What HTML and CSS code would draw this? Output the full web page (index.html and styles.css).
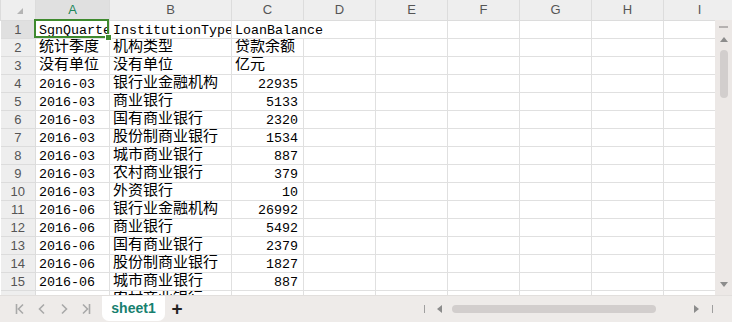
FILE: index.html
```html
<!DOCTYPE html>
<html lang="zh">
<head>
    <meta charset="UTF-8">
    <title>sheet1</title>
    <link rel="stylesheet" href="styles.css">
</head>
<body>
    <div class="book">
        <div class="sheet">
            <table class="grid">
                <colgroup>
                    <col class="w-head"><col class="w-a"><col class="w-b">
                    <col class="w-std"><col class="w-std"><col class="w-std"><col class="w-std">
                    <col class="w-std"><col class="w-std"><col class="w-std">
                </colgroup>
                <thead>
                    <tr>
                        <th class="corner"><span class="corner-mark"></span></th>
                        <th class="on">A</th><th>B</th><th>C</th><th>D</th><th>E</th>
                        <th>F</th><th>G</th><th>H</th><th>I</th>
                    </tr>
                </thead>
                <tbody>
                    <tr><th class="on">1</th><td>SgnQuarter</td><td>InstitutionType</td><td class="spill">LoanBalance</td><td></td><td></td><td></td><td></td><td></td><td></td></tr>
                    <tr><th>2</th><td class="zh">统计季度</td><td class="zh">机构类型</td><td class="zh">贷款余额</td><td></td><td></td><td></td><td></td><td></td><td></td></tr>
                    <tr><th>3</th><td class="zh">没有单位</td><td class="zh">没有单位</td><td class="zh">亿元</td><td></td><td></td><td></td><td></td><td></td><td></td></tr>
                    <tr><th>4</th><td>2016-03</td><td class="zh">银行业金融机构</td><td class="num">22935</td><td></td><td></td><td></td><td></td><td></td><td></td></tr>
                    <tr><th>5</th><td>2016-03</td><td class="zh">商业银行</td><td class="num">5133</td><td></td><td></td><td></td><td></td><td></td><td></td></tr>
                    <tr><th>6</th><td>2016-03</td><td class="zh">国有商业银行</td><td class="num">2320</td><td></td><td></td><td></td><td></td><td></td><td></td></tr>
                    <tr><th>7</th><td>2016-03</td><td class="zh">股份制商业银行</td><td class="num">1534</td><td></td><td></td><td></td><td></td><td></td><td></td></tr>
                    <tr><th>8</th><td>2016-03</td><td class="zh">城市商业银行</td><td class="num">887</td><td></td><td></td><td></td><td></td><td></td><td></td></tr>
                    <tr><th>9</th><td>2016-03</td><td class="zh">农村商业银行</td><td class="num">379</td><td></td><td></td><td></td><td></td><td></td><td></td></tr>
                    <tr><th>10</th><td>2016-03</td><td class="zh">外资银行</td><td class="num">10</td><td></td><td></td><td></td><td></td><td></td><td></td></tr>
                    <tr><th>11</th><td>2016-06</td><td class="zh">银行业金融机构</td><td class="num">26992</td><td></td><td></td><td></td><td></td><td></td><td></td></tr>
                    <tr><th>12</th><td>2016-06</td><td class="zh">商业银行</td><td class="num">5492</td><td></td><td></td><td></td><td></td><td></td><td></td></tr>
                    <tr><th>13</th><td>2016-06</td><td class="zh">国有商业银行</td><td class="num">2379</td><td></td><td></td><td></td><td></td><td></td><td></td></tr>
                    <tr><th>14</th><td>2016-06</td><td class="zh">股份制商业银行</td><td class="num">1827</td><td></td><td></td><td></td><td></td><td></td><td></td></tr>
                    <tr><th>15</th><td>2016-06</td><td class="zh">城市商业银行</td><td class="num">887</td><td></td><td></td><td></td><td></td><td></td><td></td></tr>
                    <tr><th>16</th><td>2016-06</td><td class="zh">农村商业银行</td><td class="num">379</td><td></td><td></td><td></td><td></td><td></td><td></td></tr>
                </tbody>
            </table>

            <!-- 選取框 -->
            <div class="selection"><span class="handle"></span></div>

            <!-- 垂直捲軸 -->
            <div class="vscroll">
                <span class="vs-dash"></span>
                <span class="arrow-up"></span>
                <span class="vs-thumb"></span>
                <span class="arrow-down"></span>
            </div>
        </div>

        <div class="tabbar">
            <div class="nav">
                <span class="nav-btn">
                    <svg width="10" height="12" viewBox="0 0 10 12"><path d="M1.5 1v10M8 1.5L3.5 6L8 10.5" fill="none" stroke="#a9a9a9" stroke-width="1.6"/></svg>
                </span>
                <span class="nav-btn">
                    <svg width="10" height="12" viewBox="0 0 10 12"><path d="M7 1.5L2.5 6L7 10.5" fill="none" stroke="#a9a9a9" stroke-width="1.6"/></svg>
                </span>
                <span class="nav-btn">
                    <svg width="10" height="12" viewBox="0 0 10 12"><path d="M3 1.5L7.5 6L3 10.5" fill="none" stroke="#a9a9a9" stroke-width="1.6"/></svg>
                </span>
                <span class="nav-btn">
                    <svg width="10" height="12" viewBox="0 0 10 12"><path d="M2 1.5L6.5 6L2 10.5M8.5 1v10" fill="none" stroke="#a9a9a9" stroke-width="1.6"/></svg>
                </span>
            </div>
            <div class="tab">sheet1</div>
            <div class="add">+</div>
            <div class="hscroll">
                <span class="tick"></span>
                <span class="arrow-left"></span>
                <span class="hs-thumb"></span>
                <span class="arrow-right"></span>
                <span class="tick tick-end"></span>
            </div>
        </div>
    </div>
</body>
</html>
```

FILE: styles.css
```css
body {
    margin: 0;
    padding: 0;
    font-family: "Liberation Sans", Arial, sans-serif;
    background-color: #fff;
    overflow: hidden;
}

.book {
    width: 732px;
    height: 322px;
    display: flex;
    flex-direction: column;
}

.sheet {
    position: relative;
    height: 295px;
    overflow: hidden;
    background-color: #fff;
}

/* 表格 */
.grid {
    border-collapse: collapse;
    table-layout: fixed;
    width: 736px;
}

.w-head { width: 35px; }
.w-a { width: 74px; }
.w-b { width: 122px; }
.w-std { width: 72px; }

.grid thead tr { height: 20px; }
.grid tbody tr { height: 18px; }

.grid th,
.grid td {
    padding: 0;
    border: 1px solid #e0e0e0;
    white-space: nowrap;
    overflow: hidden;
}

.grid thead th {
    border-top: none;
    border-color: #dcdcdc;
    background-color: #eeeeee;
    color: #555;
    font-size: 13px;
    font-weight: normal;
    line-height: 19px;
    text-align: center;
}

.grid tbody th {
    border-left: none;
    border-color: #dcdcdc;
    background-color: #eeeeee;
    color: #555;
    font-size: 13px;
    font-weight: normal;
    line-height: 17px;
    text-align: center;
}

.grid th.on {
    background-color: #e0e0e0;
}

.grid thead th.on {
    color: #21865a;
}

.corner-mark {
    display: block;
    width: 0;
    height: 0;
    margin: 3px 0 0 16px;
    border-left: 6px solid transparent;
    border-bottom: 6px solid #b4b4b4;
}

.grid td {
    padding: 2px 3px 0;
    font-family: "Liberation Mono", "Noto Sans CJK SC", monospace;
    font-size: 13.33px;
    line-height: 15px;
    color: #000;
}

/* 中文字體較高，往上對齊 */
.grid td.zh {
    padding-top: 0;
    vertical-align: top;
    font-family: "Noto Sans CJK SC", sans-serif;
    font-size: 15px;
    line-height: 11px;
}

.grid td.num {
    text-align: right;
    padding-right: 5px;
}

/* 文字溢出到右側空白格 */
.grid td.spill {
    overflow: visible;
    border-right-style: hidden;
}

.selection {
    position: absolute;
    left: 34px;
    top: 19px;
    width: 75px;
    height: 19px;
    box-sizing: border-box;
    border: 2px solid #3f8a2e;
}

.handle {
    position: absolute;
    right: -5px;
    bottom: -5px;
    width: 5px;
    height: 5px;
    background-color: #3f8a2e;
    border: 1px solid #fff;
}

/* 垂直捲軸 */
.vscroll {
    position: absolute;
    top: 20px;
    right: 0;
    bottom: 0;
    width: 17px;
    background-color: #ece8e6;
    display: flex;
    flex-direction: column;
    align-items: center;
}

.vs-dash {
    width: 9px;
    height: 2px;
    margin-top: 6px;
    background-color: #b5b1b0;
}

.arrow-up {
    width: 0;
    height: 0;
    margin-top: 9px;
    border-left: 4px solid transparent;
    border-right: 4px solid transparent;
    border-bottom: 5px solid #8c8c8c;
}

.vs-thumb {
    width: 8px;
    height: 48px;
    margin-top: 8px;
    border-radius: 4px;
    background-color: #d2cecd;
}

.arrow-down {
    width: 0;
    height: 0;
    margin-top: auto;
    margin-bottom: 8px;
    border-left: 4px solid transparent;
    border-right: 4px solid transparent;
    border-top: 5px solid #8c8c8c;
}

/* 底部工作表標籤 */
.tabbar {
    flex: 1;
    display: flex;
    align-items: center;
    background-color: #eeebe9;
    border-top: 1px solid #e2dfdd;
}

.nav {
    display: flex;
    padding-left: 9px;
}

.nav-btn {
    width: 22px;
    display: flex;
    justify-content: center;
    align-items: center;
}

.tab {
    align-self: flex-start;
    margin-left: 5px;
    width: 63px;
    height: 25px;
    line-height: 25px;
    text-align: center;
    background-color: #fff;
    border-radius: 0 0 7px 7px;
    color: #17806f;
    font-size: 14px;
    font-weight: bold;
}

.add {
    width: 24px;
    text-align: center;
    font-size: 19px;
    font-weight: bold;
    color: #222;
    line-height: 20px;
}

.hscroll {
    margin-left: auto;
    padding-right: 19px;
    display: flex;
    align-items: center;
}

.tick {
    width: 1px;
    height: 8px;
    background-color: #9f9f9f;
}

.tick-end {
    margin-left: 13px;
}

.arrow-left {
    width: 0;
    height: 0;
    margin-left: 12px;
    border-top: 4px solid transparent;
    border-bottom: 4px solid transparent;
    border-right: 5px solid #8c8c8c;
}

.hs-thumb {
    width: 204px;
    height: 8px;
    margin-left: 10px;
    border-radius: 4px;
    background-color: #d2cecd;
}

.arrow-right {
    width: 0;
    height: 0;
    margin-left: 38px;
    border-top: 4px solid transparent;
    border-bottom: 4px solid transparent;
    border-left: 5px solid #8c8c8c;
}
```
